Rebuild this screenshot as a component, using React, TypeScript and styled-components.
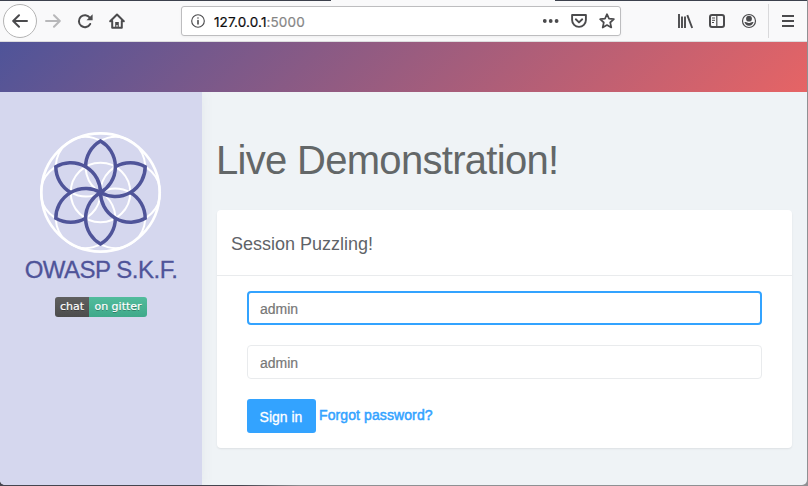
import React from "react";
import styled, { createGlobalStyle } from "styled-components";

const GlobalStyle = createGlobalStyle`
  * { box-sizing: border-box; }
  body { margin: 0; overflow: hidden; background: #98989a; font-family: "Liberation Sans", Arial, sans-serif; }
`;

const Desktop = styled.div`
  width: 808px;
  height: 486px;
  padding: 0 1px 1px 0;
  background: linear-gradient(90deg, #45454f 0 240px, #8f9093 300px);
`;

const Window = styled.div`
  height: 485px;
  display: flex;
  flex-direction: column;
  overflow: hidden;
  border-radius: 0 0 5px 5px;
  background: #eff3f6;
`;

const TabStrip = styled.div`
  height: 1px;
  flex: none;
  background: linear-gradient(90deg, #3c414d 331px, #f9f9fa 331px 555px, #3c414d 555px);
`;

const Toolbar = styled.div`
  height: 41px;
  flex: none;
  display: flex;
  align-items: center;
  background: #f9f9fa;
  border-bottom: 1px solid #dcdcde;
  color: #4b4b4d;
`;

const BackButton = styled.div`
  width: 34px;
  height: 34px;
  margin-left: 3px;
  border: 1px solid #b4b4b4;
  border-radius: 50%;
  background: #fff;
  display: grid;
  place-items: center;
`;

const ToolIcon = styled.span<{ $gap: number; $faded?: boolean }>`
  display: flex;
  width: 16px;
  height: 16px;
  margin-left: ${(p) => p.$gap}px;
  color: ${(p) => (p.$faded ? "#b8b8ba" : "inherit")};
`;

const UrlBar = styled.div`
  width: 440px;
  height: 30px;
  margin-left: 56px;
  padding: 0 5px 0 9px;
  display: flex;
  align-items: center;
  background: #fff;
  border: 1px solid #bdbdbf;
  border-radius: 3px;
  box-shadow: 0 1px 3px rgba(0, 0, 0, 0.05);
`;

const Address = styled.span`
  margin-left: 9px;
  flex: 1;
  padding-top: 1px;
  font: 13.5px/18px Inter, "Liberation Sans", sans-serif;
  letter-spacing: 0.13px;
  color: #0c0c0d;
  -webkit-text-stroke: 0.2px;
`;

const Port = styled.span`
  color: #858585;
`;

const Separator = styled.div`
  width: 1px;
  height: 34px;
  margin-left: 11px;
  background: #d9d9db;
`;

const Banner = styled.div`
  height: 50px;
  flex: none;
  background: linear-gradient(135deg, #4f5499 0%, #e66465 100%);
`;

const Page = styled.div`
  flex: 1;
  display: flex;
`;

const Sidebar = styled.aside`
  width: 202px;
  padding-top: 40px;
  display: flex;
  flex-direction: column;
  align-items: center;
  background: #d5d7ee;
  box-shadow: 0 0 12px rgba(90, 100, 120, 0.08);
  clip-path: inset(0 -16px 0 0);
`;

const Brand = styled.div`
  margin-top: 1px;
  font-size: 24px;
  line-height: 30px;
  letter-spacing: -0.5px;
  white-space: nowrap;
  color: #4f5499;
  -webkit-text-stroke: 0.3px;
`;

const Badge = styled.div`
  width: 92px;
  height: 20px;
  margin-top: 12px;
  display: flex;
  overflow: hidden;
  border-radius: 3px;
  font: 11px/20px "DejaVu Sans", sans-serif;
  color: #fff;
  text-shadow: 0 1px 0 rgba(1, 1, 1, 0.3);
  -webkit-text-stroke: 0.2px;
`;

const BadgePart = styled.span<{ $width: number; $color: string }>`
  width: ${(p) => p.$width}px;
  text-align: center;
  white-space: nowrap;
  background: linear-gradient(rgba(187, 187, 187, 0.1), rgba(0, 0, 0, 0.1)), ${(p) => p.$color};
`;

const Content = styled.main`
  flex: 1;
  padding: 44px 15px 0;
`;

const Title = styled.h1`
  margin: 0 0 0 -1px;
  font-size: 40px;
  line-height: 48px;
  font-weight: 400;
  letter-spacing: -0.7px;
  white-space: nowrap;
  color: #636768;
`;

const Card = styled.section`
  height: 238px;
  margin-top: 26px;
  border-radius: 4px;
  background: #fff;
  box-shadow: 0 1px 2px rgba(0, 0, 0, 0.08);
`;

const CardHeader = styled.header`
  height: 66px;
  padding: 4px 14px 0;
  display: flex;
  align-items: center;
  border-bottom: 1px solid #e9ebed;
  font-size: 18px;
  letter-spacing: 0;
  color: #5f6368;
`;

const Form = styled.form`
  padding: 15px 30px 0;
  display: flex;
  flex-direction: column;
  gap: 20px;
`;

const Field = styled.input<{ $active?: boolean }>`
  width: 100%;
  height: 34px;
  padding: ${(p) => (p.$active ? "2px 11px 0" : "2px 12px 0")};
  border: ${(p) => (p.$active ? "2px solid #33a3ff" : "1px solid #e9ebed")};
  border-radius: 4px;
  outline: none;
  background: #fff;
  font: 14px "Liberation Sans", Arial, sans-serif;
  &::placeholder { color: #777; opacity: 1; -webkit-text-stroke: 0.2px; }
`;

const Actions = styled.div`
  display: flex;
  gap: 3px;
`;

const SignIn = styled.button`
  width: 69px;
  height: 34px;
  padding: 2px 1px 0 0;
  border: 0;
  border-radius: 3px;
  background: #33a3ff;
  color: #fff;
  font: 14px "Liberation Sans", Arial, sans-serif;
  -webkit-text-stroke: 0.3px;
`;

const Forgot = styled.a`
  line-height: 32px;
  font-size: 14px;
  letter-spacing: 0.1px;
  color: #33a3ff;
  -webkit-text-stroke: 0.5px;
`;

const Glyph = ({ children, size = 16 }: { children: React.ReactNode; size?: number }) => (
  <svg width={size} height={size} viewBox="0 0 16 16" fill="none" stroke="currentColor" strokeWidth="2" strokeLinecap="round" strokeLinejoin="round">
    {children}
  </svg>
);

const angles = [0, 60, 120, 180, 240, 300];

const FlowerLogo = () => (
  <svg width="122" height="122" viewBox="-60.5 -60.5 122 122" fill="none">
    <g stroke="#fff" strokeWidth="2">
      <circle r="59.1" strokeWidth="2.6" />
      <circle r="29.8" />
      {angles.map((a) => (
        <circle key={a} cx="29.8" r="29.8" transform={`rotate(${a})`} />
      ))}
    </g>
    <g stroke="#4f5499" strokeWidth="3.5" strokeLinejoin="miter">
      {angles.map((a) => (
        <path key={a} d="M-14.9-25.8A29.8 29.8 0 0 1 0-51.6A29.8 29.8 0 0 1 0 0" transform={`rotate(${a})`} />
      ))}
    </g>
  </svg>
);

export default function App() {
  return (
    <>
      <GlobalStyle />
      <Desktop>
        <Window>
          <TabStrip />
          <Toolbar>
            <BackButton>
              <Glyph><path d="M15 8H1.3M7 2.2L1.2 8L7 13.8" /></Glyph>
            </BackButton>
            <ToolIcon $gap={8} $faded>
              <Glyph><path d="M1 8h13.7M9 2.2L14.8 8L9 13.8" /></Glyph>
            </ToolIcon>
            <ToolIcon $gap={16}>
              <Glyph><path d="M13.2 11A6 6 0 1 1 12.9 4.8" /><path d="M15.6 1.2v6.1H9.5z" fill="currentColor" stroke="none" /></Glyph>
            </ToolIcon>
            <ToolIcon $gap={16}>
              <Glyph><path d="M1.2 8.2L8 1.5l6.8 6.7M3.2 8v6.8h9.6V8" /><path d="M6.2 14.5V9h3.6v5.5H8.6V12H7.4v2.5z" fill="currentColor" stroke="none" /></Glyph>
            </ToolIcon>
            <UrlBar>
              <Glyph size={14}><circle cx="8" cy="8" r="7.2" strokeWidth="1.3" /><path d="M8 7.5v4M8 4.5v.1" strokeWidth="1.8" /></Glyph>
              <Address>127.0.0.1<Port>:5000</Port></Address>
              <ToolIcon $gap={0}>
                <Glyph><g fill="currentColor" stroke="none"><circle cx="1.8" cy="8" r="1.9" /><circle cx="7.7" cy="8" r="1.9" /><circle cx="13.6" cy="8" r="1.9" /></g></Glyph>
              </ToolIcon>
              <ToolIcon $gap={12}>
                <Glyph><path d="M1.1 2h13.8v5a6.9 6.9 0 0 1-13.8 0zM4.8 6.3L8 9.4l3.2-3.1" strokeWidth="1.9" /></Glyph>
              </ToolIcon>
              <ToolIcon $gap={12}>
                <Glyph><path d="M8 1.2l2 4.5 4.9.5-3.7 3.3 1.1 5L8 12l-4.3 2.5 1.1-5L1.1 6.2 6 5.7z" strokeWidth="1.7" /></Glyph>
              </ToolIcon>
            </UrlBar>
            <ToolIcon $gap={56}>
              <Glyph><path d="M2 1v14M5 3.5v11.5M8 3.5v11.5M10.3 2.2L15.2 15" strokeWidth="1.9" strokeLinecap="butt" /></Glyph>
            </ToolIcon>
            <ToolIcon $gap={16}>
              <Glyph><rect x="1" y="2" width="14" height="12" rx="2" /><path d="M7.8 2v12" strokeWidth="1.2" /><path d="M3 5h3M3 7.3h3M3 9.5h2" strokeWidth="1" strokeLinecap="butt" /></Glyph>
            </ToolIcon>
            <ToolIcon $gap={16}>
              <Glyph><circle cx="8" cy="8" r="6.5" strokeWidth="1.2" /><g fill="currentColor" stroke="none"><circle cx="8" cy="5.7" r="2.9" /><path d="M3.4 9.1Q5.3 8.8 6.2 9.5Q8 10.6 9.8 9.5Q10.7 8.8 12.6 9.1Q11.4 12.8 8 12.8Q4.6 12.8 3.4 9.1z" /></g></Glyph>
            </ToolIcon>
            <Separator />
            <ToolIcon $gap={11}>
              <Glyph><path d="M2 3h12M2 8h12M2 13h12" strokeLinecap="butt" /></Glyph>
            </ToolIcon>
          </Toolbar>
          <Banner />
          <Page>
            <Sidebar>
              <FlowerLogo />
              <Brand>OWASP S.K.F.</Brand>
              <Badge>
                <BadgePart $width={34} $color="#555">chat</BadgePart>
                <BadgePart $width={58} $color="#46bc99">on gitter</BadgePart>
              </Badge>
            </Sidebar>
            <Content>
              <Title>Live Demonstration!</Title>
              <Card>
                <CardHeader>Session Puzzling!</CardHeader>
                <Form>
                  <Field $active placeholder="admin" />
                  <Field placeholder="admin" />
                  <Actions>
                    <SignIn type="button">Sign in</SignIn>
                    <Forgot>Forgot password?</Forgot>
                  </Actions>
                </Form>
              </Card>
            </Content>
          </Page>
        </Window>
      </Desktop>
    </>
  );
}
